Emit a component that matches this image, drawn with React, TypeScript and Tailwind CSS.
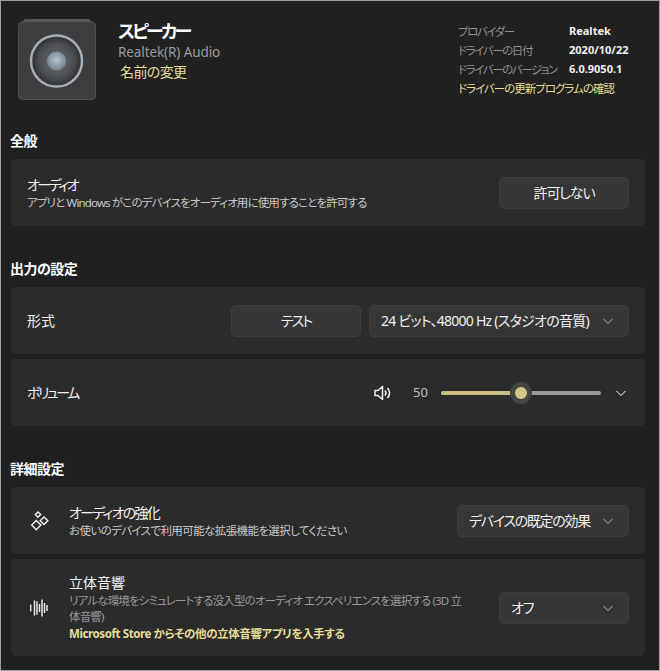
const FONT = "font-['Noto_Sans','Noto_Sans_CJK_JP',sans-serif] [font-feature-settings:'palt']";

const DRIVER_INFO = [
  { label: "プロバイダー", value: "Realtek" },
  { label: "ドライバーの日付", value: "2020/10/22" },
  { label: "ドライバーのバージョン", value: "6.0.9050.1" },
];

function Chevron({ className }: { className: string }) {
  return (
    <svg viewBox="0 0 12 12" fill="none" stroke="currentColor" className={className}>
      <path d="M1.5 4l4.5 4.5L10.500 4" strokeWidth="1" />
    </svg>
  );
}

function SpeakerArt() {
  return (
    <svg viewBox="0 0 78 82" className="w-[78px] h-[82px] shrink-0">
      <defs>
        <radialGradient id="cone" cx="50%" cy="50%" r="50%">
          <stop offset="0%" stopColor="#6b7075" />
          <stop offset="70%" stopColor="#4a4c4e" />
          <stop offset="100%" stopColor="#2b2c2d" />
        </radialGradient>
        <radialGradient id="cap" cx="50%" cy="45%" r="55%">
          <stop offset="0%" stopColor="#b9c6d2" />
          <stop offset="100%" stopColor="#74828e" />
        </radialGradient>
      </defs>
      <path d="M3 5L7 1h64l4 4z" fill="#585a5c" />
      <rect x="0.500" y="4" width="77" height="77.500" rx="4" fill="#3d3d3d" stroke="#4c4e50" />
      <circle cx="38.500" cy="43" r="25.500" fill="url(#cone)" stroke="#a5adb3" strokeWidth="2.500" />
      <circle cx="38.500" cy="43" r="9.500" fill="url(#cap)" />
    </svg>
  );
}

function EnhanceIcon() {
  return (
    <svg viewBox="0 0 20 20" fill="none" stroke="#f2f2f2" strokeWidth="1.400" className="w-5 h-5">
      <path d="M8 1l2.600 2.600L8 6.200 5.400 3.600z" />
      <path d="M14 6l3.800 3.800L14 13.600l-3.800-3.800z" />
      <path d="M6.300 9.500l4.600 4.600-4.600 4.600-4.600-4.600z" />
    </svg>
  );
}

function SpatialIcon() {
  const bars = [
    [0.7, 7],
    [4.5, 15],
    [7, 13],
    [9.5, 8],
    [12, 17],
    [14.5, 10],
    [17, 6],
  ];
  return (
    <svg viewBox="0 0 20 20" stroke="#e8e8e8" strokeWidth="1.500" className="w-5 h-5">
      {bars.map(([x, h]) => (
        <line key={x} x1={x} x2={x} y1={10 - h / 2} y2={10 + h / 2} />
      ))}
    </svg>
  );
}

function VolumeIcon() {
  return (
    <svg viewBox="0 0 18 16" fill="none" stroke="#f0f0f0" strokeWidth="1.500" className="w-[18px] h-4">
      <path d="M1 5.500h3L8.500 1.500v13L4 10.500H1z" strokeLinejoin="round" />
      <path d="M11 5.500c1.200 1.500 1.200 3.500 0 5" />
      <path d="M13.500 3c2.500 3 2.500 7 0 10" />
    </svg>
  );
}

function Select({ label, className }: { label: string; className: string }) {
  return (
    <div className={`h-8 rounded-[5px] bg-[#363636] border border-[#3c3c3c] flex items-center justify-between pl-[11px] pr-[14px] text-sm whitespace-nowrap text-[#f0f0f0] ${className}`}>
      <span>{label}</span>
      <Chevron className="w-3 h-3 shrink-0 text-[#b5b5b5]" />
    </div>
  );
}

function Heading({ children }: { children: React.ReactNode }) {
  return <h2 className="h-[18px] leading-[18px] -ml-px text-sm font-bold tracking-[-0.5px] text-white">{children}</h2>;
}

export default function App() {
  return (
    <div className={`${FONT} w-[660px] h-[671px] overflow-hidden bg-[#202020] border border-[#a0a0a0]`}>
      {/* Header */}
      <div className="flex h-[131px] pt-[17px] pl-[17px] pr-[45px]">
        <SpeakerArt />
        <div className="ml-[22px] flex-1 pt-px">
          <div className="text-lg leading-[24px] font-bold tracking-[-2.800px] text-white">スピーカー</div>
          <div className="text-[13.500px] leading-[18px] tracking-[-0.100px] text-[#9b9b9b]">Realtek(R) Audio</div>
          <div className="text-sm leading-[20px] pl-[2px] mt-px tracking-[-0.600px] text-[#e6dd96]">名前の変更</div>
        </div>
        <div className="w-[156px] text-[11.500px] pt-[4px]">
          {DRIVER_INFO.map((row) => (
            <div key={row.label} className="flex h-[19px] items-center whitespace-nowrap">
              <span className="w-[111px] shrink-0 tracking-[-1.400px] text-[#8f8f8f]">{row.label}</span>
              <span className="font-bold text-[11px] text-[#f0f0f0]">{row.value}</span>
            </div>
          ))}
          <div className="h-[20px] flex items-center tracking-[-1px] text-[#e6dd96] whitespace-nowrap">ドライバーの更新プログラムの確認</div>
        </div>
      </div>

      <div className="pl-[10px] pr-[14px]">
        {/* General */}
        <Heading>全般</Heading>
        <div className="mt-[9px] h-[67px] rounded-[5px] bg-[#2b2b2b] flex items-center justify-between pl-4 pr-4">
          <div>
            <div className="text-sm leading-[20px] tracking-[-2.500px] text-[#f2f2f2]">オーディオ</div>
            <div className="text-[11.500px] leading-[15px] tracking-[-0.850px] text-[#c8c8c8]">アプリと Windows がこのデバイスをオーディオ用に使用することを許可する</div>
          </div>
          <div className="w-[130px] h-8 rounded-[5px] bg-[#363636] border border-[#3c3c3c] flex items-center justify-center text-sm tracking-[-1.200px] text-[#f0f0f0]">許可しない</div>
        </div>

        {/* Output */}
        <div className="mt-[34px]">
          <Heading>出力の設定</Heading>
        </div>
        <div className="mt-[9px] h-[67px] rounded-[5px] bg-[#2b2b2b] flex items-center pl-4 pr-4">
          <span className="text-sm text-[#f2f2f2]">形式</span>
          <div className="ml-auto w-[130px] h-8 rounded-[5px] bg-[#363636] border border-[#3c3c3c] flex items-center justify-center text-sm tracking-[-2px] text-[#f0f0f0]">テスト</div>
          <Select label="24 ビット、48000 Hz (スタジオの音質)" className="ml-2 w-[260px] tracking-[-0.750px]" />
        </div>
        <div className="mt-[5px] h-[67px] rounded-[5px] bg-[#2b2b2b] flex items-center pl-4 pr-[18px]">
          <span className="text-sm tracking-[-2.500px] text-[#f2f2f2]">ボリューム</span>
          <div className="ml-auto flex items-center">
            <VolumeIcon />
            <span className="ml-[21px] w-[28px] text-[13px] text-[#c0c0c0]">50</span>
            <div className="relative w-[160px] h-[4px] rounded-full bg-[#9a9a9a]">
              <div className="h-full w-[72px] rounded-full bg-[#c9bd85]" />
              <div className="absolute left-[69px] top-[-9px] w-[22px] h-[22px] rounded-full bg-[#454545] flex items-center justify-center">
                <div className="w-[12px] h-[12px] rounded-full bg-[#d3c788]" />
              </div>
            </div>
            <Chevron className="ml-[14px] w-3 h-3 text-white stroke-[1.4]" />
          </div>
        </div>

        {/* Advanced */}
        <div className="mt-[34px]">
          <Heading>詳細設定</Heading>
        </div>
        <div className="mt-[9px] h-[67px] rounded-[5px] bg-[#2b2b2b] flex items-center pl-[19px] pr-4">
          <EnhanceIcon />
          <div className="ml-[19px]">
            <div className="text-sm leading-[20px] tracking-[-1.750px] text-[#f2f2f2]">オーディオの強化</div>
            <div className="text-[11.500px] leading-[15px] tracking-[-0.600px] text-[#c8c8c8]">お使いのデバイスで利用可能な拡張機能を選択してください</div>
          </div>
          <Select label="デバイスの既定の効果" className="ml-auto w-[172px] tracking-[-1.300px]" />
        </div>
        <div className="mt-[5px] h-[97px] rounded-[5px] bg-[#2b2b2b] flex items-center pl-[19px] pr-4">
          <SpatialIcon />
          <div className="ml-[19px] w-[394px]">
            <div className="text-sm leading-[20px] text-[#f2f2f2]">立体音響</div>
            <div className="text-[11.500px] leading-[16px] tracking-[-0.850px] text-[#9a9a9a]">リアルな環境をシミュレートする没入型のオーディオ エクスペリエンスを選択する (3D 立体音響)</div>
            <div className="text-[11.500px] leading-[18px] font-bold tracking-[-0.400px] text-[#e6dd96]">Microsoft Store からその他の立体音響アプリを入手する</div>
          </div>
          <Select label="オフ" className="ml-auto w-[130px] tracking-[-1px]" />
        </div>
      </div>
    </div>
  );
}
